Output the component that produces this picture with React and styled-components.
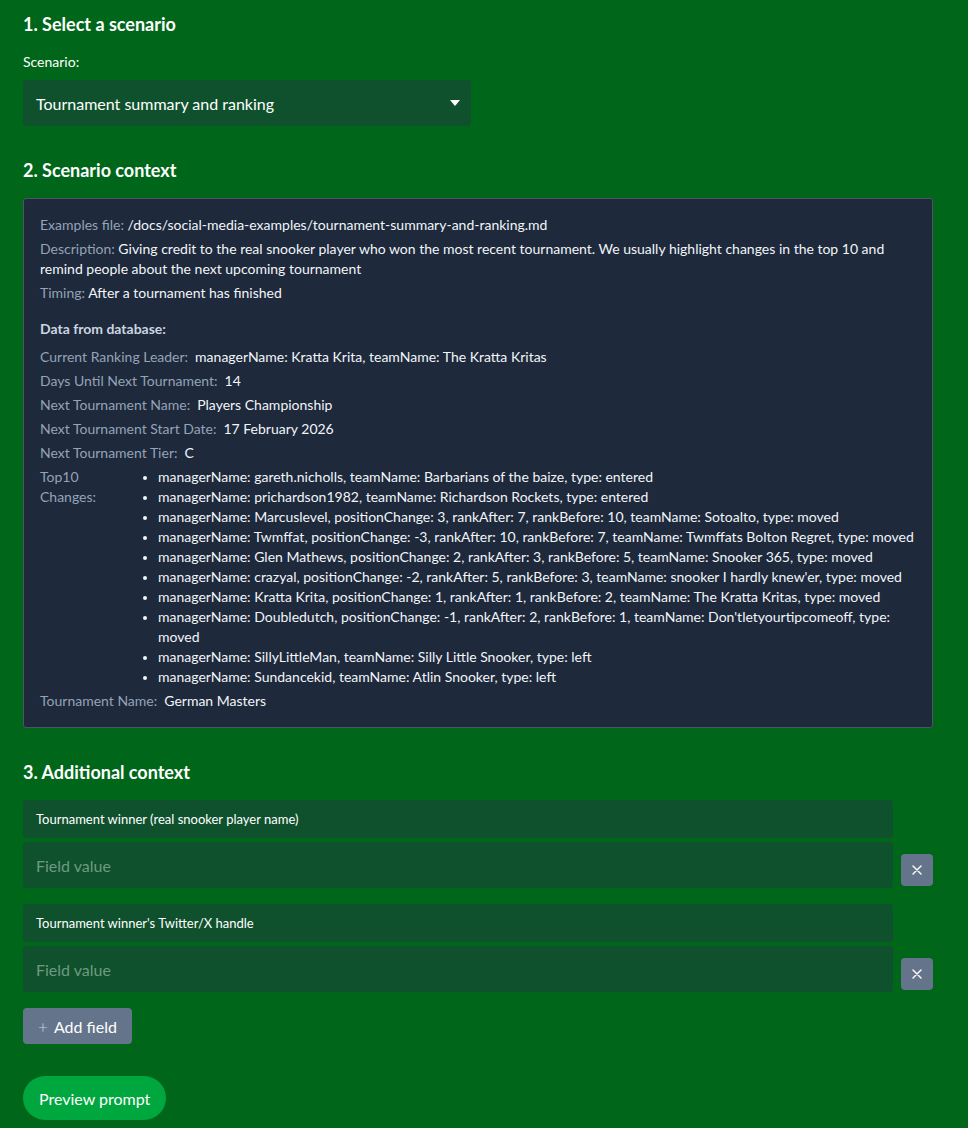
import React from "react";
import styled, { createGlobalStyle } from "styled-components";

const Global = createGlobalStyle`
  html, body { margin: 0; padding: 0; background: #006619; }
  body {
    font-family: "Segoe UI", Lato, "Noto Sans", sans-serif;
    color: #ffffff;
    -webkit-font-smoothing: antialiased;
  }
  * { box-sizing: border-box; }
`;

const Page = styled.main`
  width: 910px;
  margin-left: 23px;
  padding: 12px 0 8px;
  display: flex;
  flex-direction: column;
  gap: 32px;
`;

const Section = styled.section`
  display: flex;
  flex-direction: column;
  gap: 16px;
`;

const Heading = styled.h2`
  margin: 0;
  font-size: 18px;
  line-height: 24px;
  font-weight: 700;
  color: #ffffff;
`;

const FieldStack = styled.div`
  display: flex;
  flex-direction: column;
  gap: 8px;
`;

const SmallLabel = styled.label`
  font-size: 14px;
  line-height: 20px;
`;

const SelectBox = styled.div`
  width: 448px;
  height: 46px;
  background: #0f512d;
  border-radius: 4px;
  display: flex;
  align-items: center;
  justify-content: space-between;
  padding: 0 10px 0 13px;
  font-size: 16px;
`;

const Caret = styled.span`
  width: 0;
  height: 0;
  border-left: 5px solid transparent;
  border-right: 5px solid transparent;
  border-top: 6px solid #ffffff;
  margin-right: 1px;
`;

const Card = styled.div`
  background: #1e293b;
  border: 1px solid #4b5563;
  border-radius: 3px;
  padding: 16px;
  font-size: 14px;
  line-height: 20px;
  display: flex;
  flex-direction: column;
`;

const Meta = styled.div`
  display: flex;
  flex-direction: column;
  gap: 4px;
`;

const MetaLine = styled.p`
  margin: 0;
  color: #f1f5f9;
`;

const Key = styled.span`
  color: #94a3b8;
`;

const DataTitle = styled.div`
  margin-top: 16px;
  font-weight: 700;
  color: #cbd5e1;
`;

const DataRows = styled.div`
  margin-top: 8px;
  display: flex;
  flex-direction: column;
  gap: 4px;
`;

const DataRow = styled.div`
  display: flex;
  align-items: flex-start;
  gap: 7px;
`;

const DataKey = styled.span`
  color: #94a3b8;
  flex: ${(p) => (p.$fixed ? "0 0 96px" : "0 0 auto")};
`;

const DataValue = styled.span`
  color: #f1f5f9;
`;

const List = styled.ul`
  margin: 0;
  padding-left: 15px;
  color: #f1f5f9;
  flex: 1;
  li::marker { font-size: 12px; }
`;

const Group = styled.div`
  display: grid;
  grid-template-columns: 870px 32px;
  column-gap: 8px;
  row-gap: 4px;
`;

const FieldName = styled.div`
  grid-column: 1;
  height: 38px;
  background: #0f512d;
  border-radius: 4px;
  display: flex;
  align-items: center;
  padding: 0 13px;
  font-size: 13px;
`;

const FieldValue = styled.div`
  grid-column: 1;
  height: 46px;
  background: #0f512d;
  border-radius: 4px;
  display: flex;
  align-items: center;
  padding: 0 13px;
  font-size: 16px;
  color: #6f9a80;
`;

const RemoveButton = styled.button`
  align-self: end;
  margin-bottom: 2px;
  width: 32px;
  height: 32px;
  border: none;
  border-radius: 4px;
  background: #64748b;
  color: #ffffff;
  display: flex;
  align-items: center;
  justify-content: center;
  padding: 0;
`;

const Actions = styled.div`
  display: flex;
  flex-direction: column;
  align-items: flex-start;
  gap: 32px;
`;

const AddButton = styled.button`
  height: 36px;
  border: none;
  border-radius: 4px;
  background: #64748b;
  color: #ffffff;
  font-family: inherit;
  font-size: 16px;
  padding: 0 15px;
  display: flex;
  align-items: center;
  gap: 6px;
`;

const Plus = styled.span`
  color: #cbd5e1;
  font-weight: 300;
  font-size: 17px;
`;

const PreviewButton = styled.button`
  height: 44px;
  border: none;
  border-radius: 22px;
  background: #00a63e;
  color: #ffffff;
  font-family: inherit;
  font-size: 16px;
  padding: 0 16px;
`;

const XIcon = () => (
  <svg width="10" height="10" viewBox="0 0 10 10" fill="none">
    <path d="M1 1L9 9M9 1L1 9" stroke="#fff" strokeWidth="1.4" strokeLinecap="round" />
  </svg>
);

const changes = [
  "managerName: gareth.nicholls, teamName: Barbarians of the baize, type: entered",
  "managerName: prichardson1982, teamName: Richardson Rockets, type: entered",
  "managerName: Marcuslevel, positionChange: 3, rankAfter: 7, rankBefore: 10, teamName: Sotoalto, type: moved",
  "managerName: Twmffat, positionChange: -3, rankAfter: 10, rankBefore: 7, teamName: Twmffats Bolton Regret, type: moved",
  "managerName: Glen Mathews, positionChange: 2, rankAfter: 3, rankBefore: 5, teamName: Snooker 365, type: moved",
  "managerName: crazyal, positionChange: -2, rankAfter: 5, rankBefore: 3, teamName: snooker I hardly knew'er, type: moved",
  "managerName: Kratta Krita, positionChange: 1, rankAfter: 1, rankBefore: 2, teamName: The Kratta Kritas, type: moved",
  "managerName: Doubledutch, positionChange: -1, rankAfter: 2, rankBefore: 1, teamName: Don'tletyourtipcomeoff, type: moved",
  "managerName: SillyLittleMan, teamName: Silly Little Snooker, type: left",
  "managerName: Sundancekid, teamName: Atlin Snooker, type: left",
];

const rows = [
  ["Current Ranking Leader:", "managerName: Kratta Krita, teamName: The Kratta Kritas"],
  ["Days Until Next Tournament:", "14"],
  ["Next Tournament Name:", "Players Championship"],
  ["Next Tournament Start Date:", "17 February 2026"],
  ["Next Tournament Tier:", "C"],
];

const fields = [
  "Tournament winner (real snooker player name)",
  "Tournament winner's Twitter/X handle",
];

export default function App() {
  return (
    <>
      <Global />
      <Page>
        <Section>
          <Heading>1. Select a scenario</Heading>
          <FieldStack>
            <SmallLabel>Scenario:</SmallLabel>
            <SelectBox>
              <span>Tournament summary and ranking</span>
              <Caret />
            </SelectBox>
          </FieldStack>
        </Section>

        <Section>
          <Heading>2. Scenario context</Heading>
          <Card>
            <Meta>
              <MetaLine>
                <Key>Examples file:</Key> /docs/social-media-examples/tournament-summary-and-ranking.md
              </MetaLine>
              <MetaLine>
                <Key>Description:</Key> Giving credit to the real snooker player who won the most recent tournament. We usually highlight changes in the top 10 and remind people about the next upcoming tournament
              </MetaLine>
              <MetaLine>
                <Key>Timing:</Key> After a tournament has finished
              </MetaLine>
            </Meta>
            <DataTitle>Data from database:</DataTitle>
            <DataRows>
              {rows.map(([k, v]) => (
                <DataRow key={k}>
                  <DataKey>{k}</DataKey>
                  <DataValue>{v}</DataValue>
                </DataRow>
              ))}
              <DataRow>
                <DataKey $fixed>Top10 Changes:</DataKey>
                <List>
                  {changes.map((c) => (
                    <li key={c}>{c}</li>
                  ))}
                </List>
              </DataRow>
              <DataRow>
                <DataKey>Tournament Name:</DataKey>
                <DataValue>German Masters</DataValue>
              </DataRow>
            </DataRows>
          </Card>
        </Section>

        <Section>
          <Heading>3. Additional context</Heading>
          {fields.map((f) => (
            <Group key={f}>
              <FieldName>{f}</FieldName>
              <span />
              <FieldValue>Field value</FieldValue>
              <RemoveButton aria-label="Remove field">
                <XIcon />
              </RemoveButton>
            </Group>
          ))}
          <Actions>
            <AddButton>
              <Plus>+</Plus>Add field
            </AddButton>
            <PreviewButton>Preview prompt</PreviewButton>
          </Actions>
        </Section>
      </Page>
    </>
  );
}
